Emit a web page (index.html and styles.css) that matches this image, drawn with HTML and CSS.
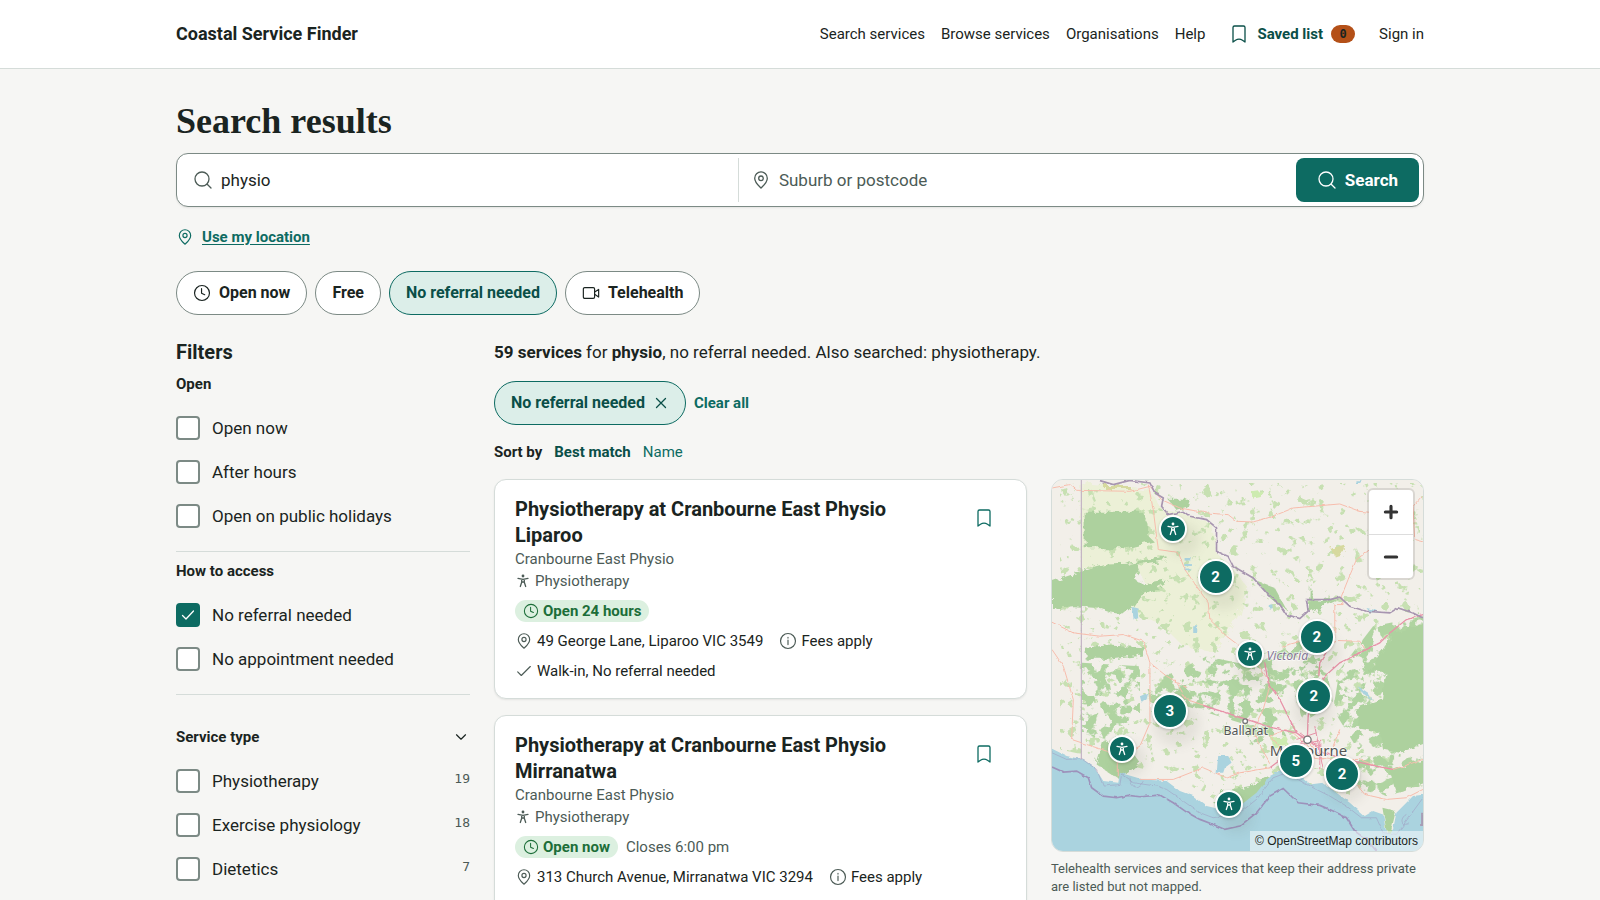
FILE: index.html
```html
<!DOCTYPE html>
<html lang="en">
<head>
<meta charset="utf-8">
<meta name="viewport" content="width=device-width, initial-scale=1">
<title>Search results - Coastal Service Finder</title>
<link rel="stylesheet" href="styles.css">
</head>
<body>
<svg class="sprite" aria-hidden="true">
  <symbol id="i-search" viewBox="0 0 20 20"><circle cx="9" cy="9" r="7"/><path d="M14.2 14.2 18 18"/></symbol>
  <symbol id="i-pin" viewBox="0 0 20 20"><path d="M10 18c-1.800-1.800-6.300-5.400-6.300-9.800a6.300 6.300 0 0 1 12.600 0c0 4.400-4.500 8-6.300 9.800Z"/><circle cx="10" cy="8.300" r="2.300"/></symbol>
  <symbol id="i-clock" viewBox="0 0 20 20"><circle cx="10" cy="10" r="8.300"/><path d="M9.500 5.200v5l3.500 1.700"/></symbol>
  <symbol id="i-video" viewBox="0 0 20 20"><rect x="1.500" y="4" width="12.500" height="12" rx="1.500"/><path d="m14 9 4.500-3v8.500l-4.500-3"/></symbol>
  <symbol id="i-bookmark" viewBox="0 0 20 20"><path d="M4 18V3.500A1.500 1.500 0 0 1 5.500 2h9A1.500 1.500 0 0 1 16 3.500V18l-2.500-1.800c-2-1.200-5-1.200-7 0Z"/></symbol>
  <symbol id="i-info" viewBox="0 0 20 20"><circle cx="10" cy="10" r="8.300"/><path d="M10 9v5M10 6v.8"/></symbol>
  <symbol id="i-check" viewBox="0 0 20 20"><path d="m3 11 4 4L17 5"/></symbol>
  <symbol id="i-close" viewBox="0 0 16 16"><path d="m3.500 3.500 9 9m0-9-9 9"/></symbol>
  <symbol id="i-chevron" viewBox="0 0 20 20"><path d="m5 7.500 5 5 5-5"/></symbol>
  <symbol id="i-person" viewBox="0 0 16 16"><circle class="solid" cx="8" cy="3" r="1.400"/><path d="M3 5.300 8 6.300l5-1M6.700 6.300v3L5.300 13.500M9.300 6.300v3l1.400 4.200M6.700 9.300 8 8.800l1.300.5"/></symbol>
</svg>

<header class="topbar">
  <div class="wrap topbar-inner">
    <a class="brand" href="#">Coastal Service Finder</a>
    <nav class="nav" aria-label="Main">
      <a href="#">Search services</a>
      <a href="#">Browse services</a>
      <a href="#">Organisations</a>
      <a href="#">Help</a>
      <a class="saved" href="#"><svg class="icon"><use href="#i-bookmark"/></svg>Saved list <span class="badge">0</span></a>
      <a class="signin" href="#">Sign in</a>
    </nav>
  </div>
</header>

<main class="wrap page">
  <h1>Search results</h1>
  <form class="searchbar">
    <label class="field"><svg class="icon muted"><use href="#i-search"/></svg><input type="text" value="physio" aria-label="Service"></label>
    <label class="field place"><svg class="icon muted"><use href="#i-pin"/></svg><input type="text" placeholder="Suburb or postcode" aria-label="Suburb or postcode"></label>
    <button class="search-btn" type="button"><svg class="icon"><use href="#i-search"/></svg>Search</button>
  </form>
  <button class="locate" type="button"><svg class="icon"><use href="#i-pin"/></svg><span>Use my location</span></button>
  <div class="chips">
    <button class="chip" type="button"><svg class="icon"><use href="#i-clock"/></svg>Open now</button>
    <button class="chip" type="button">Free</button>
    <button class="chip active" type="button">No referral needed</button>
    <button class="chip" type="button"><svg class="icon"><use href="#i-video"/></svg>Telehealth</button>
  </div>

  <div class="columns">
    <aside class="filters">
      <h2>Filters</h2>
      <fieldset>
        <legend>Open</legend>
        <label class="opt"><input type="checkbox">Open now</label>
        <label class="opt"><input type="checkbox">After hours</label>
        <label class="opt"><input type="checkbox">Open on public holidays</label>
      </fieldset>
      <fieldset>
        <legend>How to access</legend>
        <label class="opt"><input type="checkbox" checked>No referral needed</label>
        <label class="opt"><input type="checkbox">No appointment needed</label>
      </fieldset>
      <section>
        <button class="group-toggle" type="button">Service type <svg class="icon-md"><use href="#i-chevron"/></svg></button>
        <label class="opt"><input type="checkbox">Physiotherapy <span class="count">19</span></label>
        <label class="opt"><input type="checkbox">Exercise physiology <span class="count">18</span></label>
        <label class="opt"><input type="checkbox">Dietetics <span class="count">7</span></label>
      </section>
    </aside>

    <div class="main-col">
      <p class="summary"><strong>59 services</strong> for <strong>physio</strong>, no referral needed. Also searched: physiotherapy.</p>
      <div class="applied">
        <button class="chip active" type="button">No referral needed <svg class="icon-sm"><use href="#i-close"/></svg></button>
        <a class="clear" href="#">Clear all</a>
      </div>
      <div class="sort"><strong>Sort by</strong><a class="current" href="#">Best match</a><a href="#">Name</a></div>

      <div class="results">
        <div class="list">
          <article class="card">
            <div class="card-head">
              <div>
                <h3>Physiotherapy at Cranbourne East Physio Liparoo</h3>
                <p class="org">Cranbourne East Physio</p>
                <p class="org type"><svg class="icon-sm"><use href="#i-person"/></svg>Physiotherapy</p>
              </div>
              <button class="save" type="button" aria-label="Save"><svg class="icon"><use href="#i-bookmark"/></svg></button>
            </div>
            <p class="status"><span class="pill"><svg class="icon-sm"><use href="#i-clock"/></svg>Open 24 hours</span></p>
            <ul class="facts">
              <li><svg class="icon-md"><use href="#i-pin"/></svg>49 George Lane, Liparoo VIC 3549</li>
              <li><svg class="icon-md"><use href="#i-info"/></svg>Fees apply</li>
              <li><svg class="icon-md"><use href="#i-check"/></svg>Walk-in, No referral needed</li>
            </ul>
          </article>
          <article class="card">
            <div class="card-head">
              <div>
                <h3>Physiotherapy at Cranbourne East Physio Mirranatwa</h3>
                <p class="org">Cranbourne East Physio</p>
                <p class="org type"><svg class="icon-sm"><use href="#i-person"/></svg>Physiotherapy</p>
              </div>
              <button class="save" type="button" aria-label="Save"><svg class="icon"><use href="#i-bookmark"/></svg></button>
            </div>
            <p class="status"><span class="pill"><svg class="icon-sm"><use href="#i-clock"/></svg>Open now</span><span class="closes">Closes 6:00 pm</span></p>
            <ul class="facts">
              <li><svg class="icon-md"><use href="#i-pin"/></svg>313 Church Avenue, Mirranatwa VIC 3294</li>
              <li><svg class="icon-md"><use href="#i-info"/></svg>Fees apply</li>
            </ul>
          </article>
        </div>

        <div class="map-col">
          <div class="map">
            <svg class="tiles" viewBox="36 30 1114 1116" preserveAspectRatio="xMidYMid slice" aria-hidden="true">
              <defs>
                <filter id="rough" x="-5%" y="-5%" width="110%" height="110%"><feTurbulence type="fractalNoise" baseFrequency=".04" numOctaves="3" seed="4"/><feDisplacementMap in="SourceGraphic" scale="26"/></filter>
                <filter id="jag" filterUnits="userSpaceOnUse" x="0" y="0" width="1200" height="1200"><feTurbulence type="fractalNoise" baseFrequency=".05" numOctaves="2" seed="8"/><feDisplacementMap in="SourceGraphic" scale="9" xChannelSelector="R" yChannelSelector="G"/></filter>
                <filter id="specks" color-interpolation-filters="sRGB" x="0" y="0" width="100%" height="100%"><feTurbulence type="fractalNoise" baseFrequency=".03" numOctaves="4" seed="11"/><feColorMatrix values="0 0 0 0 .69  0 0 0 0 .83  0 0 0 0 .63  14 0 0 0 -6.900"/><feComposite in2="SourceGraphic" operator="in"/></filter>
                <filter id="sparse" color-interpolation-filters="sRGB" x="0" y="0" width="100%" height="100%"><feTurbulence type="fractalNoise" baseFrequency=".035" numOctaves="4" seed="23"/><feColorMatrix values="0 0 0 0 .78  0 0 0 0 .88  0 0 0 0 .7  14 0 0 0 -8.800"/><feComposite in2="SourceGraphic" operator="in"/></filter>
                <filter id="soft" x="-20%" y="-20%" width="140%" height="140%"><feGaussianBlur stdDeviation="16"/></filter>
              </defs>
              <rect x="0" y="0" width="1200" height="1200" fill="#f2efe9"/>
              <g fill="#ecf0d7" filter="url(#rough)">
                <path d="M124 40 330 60 365 120 430 130 520 165 530 250 590 310 620 350 600 430 560 500 520 545 430 530 370 470 280 430 270 390 320 350 290 290 124 300Z"/>
              </g>
              <path fill="#000" filter="url(#sparse)" d="M60 40H1150V800L900 1000 560 1010 400 920 150 860 60 840Z"/>
              <g fill="#000" filter="url(#specks)">
                <path d="M500 560 640 590 800 500 860 600 880 700 790 760 760 660 690 700 740 800 640 830 600 760 440 710 330 700 320 640 420 600Z"/>
                <path d="M126 580 300 590 300 740 210 820 126 790Z"/>
                <path d="M900 600 1000 470 1150 440V840L960 850 880 720Z"/>
                <path d="M900 870 1150 830V950L1040 980 960 960Z"/>
              </g>
              <g fill="#add19e" filter="url(#rough)">
                <path d="M134 126H308l18 40-4 30 20 20-80 20H134Z"/>
                <path d="M36 335 110 310 200 285 290 282 300 310 285 330 310 345 385 332 350 355 300 380 280 410 250 435 210 428 170 415 100 410 36 415Z"/>
                <path d="M385 90h65l-8 25-30 8Z"/><path d="m260 280 120-20-5 12-100 16Z"/>
                <path d="m650 335 55 20 35 65-45-30Z"/><path d="m810 350 12 40 70 2-85 40Z"/>
                <path d="M134 535 200 528 315 533 305 555 205 568 134 568Z"/>
                <path d="M1060 490 1160 460V820L1080 850 1030 840 1020 790 960 780 950 720 1030 690 1040 610 985 610Z"/>
                <path d="M190 815 250 810 300 880 240 930 170 885Z"/>
                <path d="m520 1000 30-35 80-15 50-30 20 10-50 60-60 50-40-20Z"/>
                <path d="m1050 905 110-40v70l-90 30Z"/>
                <path d="m400 665 40-20 15 40-30 10Z"/>
              </g>
              <g fill="#cdebb0" filter="url(#rough)"><path d="m635 65 30-5-2 22-25 5ZM690 805l50-5 10 30-45 10Zm170 155 30 0-10 12-20 0Z"/></g>
              <g fill="#d6d99f" filter="url(#rough)"><path d="m878 240 40-12v18l-36 12ZM195 46h75v12h-75Z"/></g>
              <g fill="#aad3df" filter="url(#jag)">
                <path d="m275 412 18 5 2 30-14 0ZM434 265h18v8h-18Zm0 18h22v6h-22Zm0 14h20v5h-20ZM460 470h12v20h-12ZM535 860l30 0 10 20-20 15-5 15-20 0ZM690 405h8v12h-8ZM950 32h12v8h-12ZM980 415l20 5 20 8-30 0ZM300 680l25-10-5 20-15 10ZM955 650l30 20 15 20-35-20Z"/>
              </g>
              <g filter="url(#jag)">
                <path fill="#aad3df" d="M30 835 80 860 130 870 165 895 190 935 235 940 240 910 310 930 380 935 420 965 460 980 500 1010 545 1020 605 1005 650 970 690 920 720 905 745 870 760 850 800 850 815 890 780 920 810 945 850 940 890 970 930 1000 975 1040 1000 1025 1030 1035 1040 1090 1060 1080 1070 1030 1120 980 1160 975V1160H30Z"/>
                <path fill="#add19e" d="m1028 1015 40 10-15 65-12 0Z"/>
                <g fill="none" stroke="#9d92bb">
                  <path stroke-width="2" opacity=".7" d="M36 850 80 870 125 868 170 900 190 950 240 945 245 915 280 940 350 950 380 960 430 995 480 1030 520 1045 600 1030 650 990 700 925 740 910 800 945 870 980 920 1010 965 1045 1010 1045 1030 1090 1070 1095 1110 1040 1150 985M1100 1035c-25 15-10 40 8 25M270 925c5 40 30 30 40 10"/>
                  <path stroke-width="5" d="M36 893 70 908 110 905 145 925 155 955 190 980 230 985 265 978 300 982 360 977 400 1000 440 1028 480 1050 520 1065 555 1080 600 1070 650 1030 690 980 730 957 775 1000 840 1008 880 1025 920 1045 945 1085 980 1110 1010 1145"/>
                </g>
              </g>
              <path fill="none" stroke="#b9a8bd" stroke-width="3" d="M124 30V870"/>
              <g filter="url(#jag)" fill="none">
                <g stroke="#f7bdad" stroke-width="3">
                  <path d="M36 55 90 45 110 62 270 65 330 50 365 90 420 115 500 130 565 135 590 155 640 157 700 140 760 115 900 103 960 125 1060 135"/>
                  <path d="M325 45 340 120 355 240 415 248 435 300 470 350 505 400 510 450 560 500 640 560 690 640"/>
                  <path d="M36 458 100 490 180 500 250 495 310 515 330 580 380 620 440 655M330 580V760L300 830 225 870M36 540 70 590 100 690 95 810 200 845 235 870 235 920"/>
                  <path d="M300 930 400 930 490 895 560 925 600 910 690 895M405 630 440 690 500 710M690 650 670 720 640 780 650 810 690 880M730 530 800 510 960 515 980 545M910 405H885V520M1150 75 1120 110 1125 210 1150 217M990 240 950 270 925 330 905 380 910 405"/>
                  <path d="M800 870 740 850 690 800 740 780M800 860 870 870 960 870 1010 890 1060 900 1150 870M950 945 975 975 1040 990 1100 985 1150 960M880 830 900 780M800 810 850 870M760 790 850 870"/>
                </g>
                <g stroke="#e892a8" stroke-width="4">
                  <path d="M1150 435 1100 450 1050 490 1020 520 960 550 900 580 850 625 820 680 805 740 803 800M870 530 840 580 837 620M675 580 685 640 720 690 770 790 800 812M490 708 620 750 700 775 770 790 803 812M690 895 750 850 790 815M810 815 850 850 920 870 1010 890 1060 900"/>
                  <path stroke-width="3" d="M770 810 830 790M780 790 835 830M765 830 845 812M825 770 850 900M840 812V900"/>
                </g>
                <path stroke="#a795b0" stroke-width="5" d="M180 33 220 45 270 32 330 40 345 70 370 85 365 110 385 135 430 125 450 140 500 150 530 175 530 245 565 260 580 290 640 325 680 370 720 405 740 435 780 447 805 425 800 390 870 390 900 383 930 410 980 425 1050 430 1075 415 1120 430 1150 445M1147 1030v40"/>
              </g>
              <g fill="#554" opacity=".09" filter="url(#soft)"><circle cx="430" cy="210" r="50"/><circle cx="550" cy="360" r="60"/><circle cx="410" cy="760" r="70"/><circle cx="840" cy="550" r="60"/><circle cx="640" cy="600" r="50"/><circle cx="270" cy="870" r="50"/><circle cx="820" cy="720" r="60"/><circle cx="590" cy="1040" r="50"/><circle cx="920" cy="940" r="60"/></g>
              <circle cx="616" cy="755" r="7" class="town"/><circle cx="803" cy="811" r="11" class="town"/>
              <g class="map-label"><text x="680" y="571" class="state">Victoria</text><text x="551" y="797" class="ballarat">Ballarat</text><text x="690" y="861" class="city">Melbourne</text></g>
            </svg>
            <button class="pin" type="button" aria-label="Service" style="left:32.500%;top:13.100%"><svg class="icon-sm"><use href="#i-person"/></svg></button>
            <button class="pin cluster" type="button" style="left:44.100%;top:26.200%">2</button>
            <button class="pin cluster" type="button" style="left:71.400%;top:42.300%">2</button>
            <button class="pin" type="button" aria-label="Service" style="left:53.300%;top:46.900%"><svg class="icon-sm"><use href="#i-person"/></svg></button>
            <button class="pin cluster" type="button" style="left:70.600%;top:58.100%">2</button>
            <button class="pin cluster" type="button" style="left:31.800%;top:62.300%">3</button>
            <button class="pin" type="button" aria-label="Service" style="left:18.800%;top:72.500%"><svg class="icon-sm"><use href="#i-person"/></svg></button>
            <button class="pin cluster" type="button" style="left:65.700%;top:75.700%">5</button>
            <button class="pin cluster" type="button" style="left:78.200%;top:79.200%">2</button>
            <button class="pin" type="button" aria-label="Service" style="left:47.700%;top:87.300%"><svg class="icon-sm"><use href="#i-person"/></svg></button>
            <div class="zoom">
              <button type="button" aria-label="Zoom in"><svg viewBox="0 0 16 16"><path d="M8 3.500v9M3.500 8h9"/></svg></button>
              <button type="button" aria-label="Zoom out"><svg viewBox="0 0 16 16"><path d="M3.500 8h9"/></svg></button>
            </div>
            <a class="credit" href="#">© OpenStreetMap contributors</a>
          </div>
          <p class="note">Telehealth services and services that keep their address private are listed but not mapped.</p>
        </div>
      </div>
    </div>
  </div>
</main>
</body>
</html>
```
FILE: styles.css
```css
:root {
  --ink: #1a2421;
  --muted: #4c5b56;
  --teal: #0d6b62;
  --teal-dark: #0a4f48;
  --mint: #dceee9;
  --line: #d5dcd9;
  --edge: #7c8a85;
  --bg: #f6f6f4;
}
* { box-sizing: border-box; }
html { overflow: hidden; }
body {
  margin: 0;
  height: 100vh;
  overflow: hidden;
  background: var(--bg);
  color: var(--ink);
  font: 17px/24px Roboto, "Liberation Sans", sans-serif;
}
h1, h2, h3, p, ul { margin: 0; padding: 0; }
a { color: inherit; text-decoration: none; }
button, input { font: inherit; color: inherit; }
button { cursor: pointer; }
.sprite { position: absolute; width: 0; height: 0; }
.icon, .icon-md, .icon-sm {
  flex: none;
  fill: none;
  stroke: currentColor;
  stroke-width: 1.3;
  stroke-linecap: round;
  stroke-linejoin: round;
}
.icon { width: 20px; height: 20px; }
.icon-md { width: 18px; height: 18px; }
.icon-sm { width: 16px; height: 16px; }
.solid { fill: currentColor; stroke: none; }
.muted { color: var(--muted); }
.wrap { width: 100%; max-width: 1296px; margin: 0 auto; padding: 0 24px; }

.topbar { background: #fff; border-bottom: 1px solid var(--line); }
.topbar-inner { display: flex; align-items: center; justify-content: space-between; height: 68px; }
.brand { font-size: 18px; font-weight: 700; }
.nav { display: flex; align-items: center; gap: 16px; font-size: 15px; }
.saved { display: flex; align-items: center; gap: 8px; margin-left: 8px; color: var(--teal-dark); font-weight: 700; }
.badge { width: 24px; border-radius: 9px; background: #b45018; color: var(--ink); font: 700 12px/18px "DejaVu Sans Mono", monospace; text-align: center; }
.signin { margin-left: 8px; }

.page { padding-top: 32px; }
h1 { font: 700 36px/40px "Liberation Serif", serif; }
.searchbar {
  display: flex;
  align-items: stretch;
  margin-top: 12px;
  padding: 4px;
  border: 1px solid var(--edge);
  border-radius: 12px;
  background: #fff;
  box-shadow: 0 1px 2px rgba(0, 0, 0, .08);
}
.field { display: flex; flex: 1; align-items: center; gap: 8px; padding: 0 12px; }
.place { border-left: 1px solid var(--line); }
.field input { flex: 1; min-width: 0; padding: 0; border: 0; outline: 0; background: none; }
.field input::placeholder { color: var(--muted); opacity: 1; }
.search-btn {
  display: flex;
  align-items: center;
  gap: 8px;
  height: 44px;
  padding: 0 21px;
  border: 0;
  border-radius: 8px;
  background: var(--teal);
  color: #fff;
  font-weight: 700;
}
.locate { display: flex; align-items: center; gap: 8px; height: 44px; margin-top: 8px; padding: 0; border: 0; background: none; color: var(--teal); font-size: 15px; font-weight: 700; }
.locate .icon { width: 18px; height: 18px; }
.locate span { text-decoration: underline; text-underline-offset: 2px; }
.chips, .applied { display: flex; align-items: center; gap: 8px; }
.chips { margin-top: 12px; }
.chip {
  display: flex;
  align-items: center;
  gap: 8px;
  height: 44px;
  padding: 0 16px;
  border: 1px solid var(--edge);
  border-radius: 22px;
  background: #fff;
  font-size: 16px;
  font-weight: 700;
}
.chip .icon { width: 18px; height: 18px; }
.chip.active { border-color: var(--teal); background: var(--mint); color: var(--teal-dark); }

.columns { display: grid; grid-template-columns: 294px minmax(0, 1fr); gap: 24px; margin-top: 24px; }
.filters h2 { font-size: 20px; line-height: 26px; }
fieldset { margin: 0; padding: 0 0 13px; border: 0; border-bottom: 1px solid var(--line); }
fieldset + fieldset { margin-top: 7px; }
legend { padding: 0 0 10px; font-size: 15px; font-weight: 700; }
h2 + fieldset legend { padding-top: 7px; }
.opt { display: flex; align-items: center; gap: 12px; height: 44px; }
.opt input {
  width: 24px;
  height: 24px;
  margin: 0;
  appearance: none;
  border: 2px solid var(--edge);
  border-radius: 4px;
  background: #fff;
}
.opt input:checked {
  border-color: var(--teal);
  background: var(--teal) url("data:image/svg+xml,%3Csvg xmlns='http://www.w3.org/2000/svg' viewBox='0 0 20 20' fill='none' stroke='white' stroke-width='1.300' stroke-linecap='round' stroke-linejoin='round'%3E%3Cpath d='m4.500 10.500 3.500 3.500 7.500-8'/%3E%3C/svg%3E") center / 100%;
}
.count { margin-left: auto; padding-bottom: 4px; color: var(--muted); font: 13px/20px "DejaVu Sans Mono", monospace; }
.group-toggle { display: flex; align-items: center; justify-content: space-between; width: 100%; height: 44px; margin-top: 20px; padding: 0; border: 0; background: none; font-size: 15px; font-weight: 700; }

.summary { line-height: 26px; }
.applied { margin-top: 16px; }
.clear { color: var(--teal); font-size: 15px; font-weight: 700; }
.sort { display: flex; gap: 12px; margin: 15px 0; font-size: 15px; color: var(--teal); }
.sort strong { color: var(--ink); }
.sort .current { color: var(--teal-dark); font-weight: 700; }
.results { display: grid; grid-template-columns: minmax(0, 10fr) minmax(0, 7fr); align-items: start; gap: 24px; }
.list { display: grid; gap: 16px; }
.card { padding: 16px 20px; border: 1px solid var(--line); border-radius: 12px; background: #fff; box-shadow: 0 1px 2px rgba(0, 0, 0, .08); font-size: 15px; }
.card:last-child { padding-bottom: 48px; }
.card-head { display: flex; align-items: flex-start; justify-content: space-between; gap: 48px; }
h3 { font-size: 20px; line-height: 26px; }
.org { color: var(--muted); line-height: 22px; }
.type { display: flex; align-items: center; gap: 4px; }
.save { display: grid; place-items: center; flex: none; width: 44px; height: 44px; padding: 0; border: 0; background: none; color: var(--teal); }
.status { display: flex; align-items: center; gap: 8px; margin-top: 8px; line-height: 22px; }
.pill { display: flex; align-items: center; gap: 4px; padding: 0 8px; border-radius: 11px; background: #dcf0e0; color: #1c6e39; font-weight: 700; }
.closes { color: var(--muted); }
.facts { display: flex; flex-wrap: wrap; gap: 8px 16px; margin-top: 8px; list-style: none; line-height: 22px; }
.facts li { display: flex; align-items: center; gap: 4px; }
.facts svg { color: var(--muted); }

.map { position: relative; aspect-ratio: 1; overflow: hidden; border: 1px solid var(--line); border-radius: 12px; }
.tiles { display: block; width: 100%; height: 100%; }
.map-label { font-family: "Noto Sans", sans-serif; fill: #555; stroke: #fff; stroke-width: 5px; stroke-opacity: .7; paint-order: stroke; }
.state { font-size: 37px; font-style: italic; fill: #877897; }
.ballarat { font-size: 37px; }
.city { font-size: 45px; }
.town { fill: #fff; stroke: #777; stroke-width: 4px; }
.pin {
  position: absolute;
  display: grid;
  place-items: center;
  width: 28px;
  height: 28px;
  padding: 0;
  border: 2px solid #fff;
  border-radius: 50%;
  background: var(--teal);
  color: #fff;
  box-shadow: 0 1px 3px rgba(0, 0, 0, .2);
  transform: translate(-50%, -50%);
}
.cluster { width: 36px; height: 36px; font-size: 15px; font-weight: 700; }
.zoom { position: absolute; top: 10px; right: 10px; display: grid; width: 44px; border-radius: 4px; background: #fff; box-shadow: 0 0 0 2px rgba(0, 0, 0, .1); }
.zoom button { display: grid; place-items: center; height: 44px; padding: 0; border: 0; background: none; }
.zoom button + button { border-top: 1px solid #ddd; }
.zoom svg { width: 20px; height: 20px; stroke: #333; stroke-width: 2.5; stroke-linecap: round; }
.credit { position: absolute; right: 0; bottom: 0; padding: 0 5px; background: rgba(255, 255, 255, .5); font: 12px/20px "Liberation Sans", Arial, sans-serif; }
.note { margin-top: 8px; color: var(--muted); font-size: 13px; line-height: 18px; }
```
